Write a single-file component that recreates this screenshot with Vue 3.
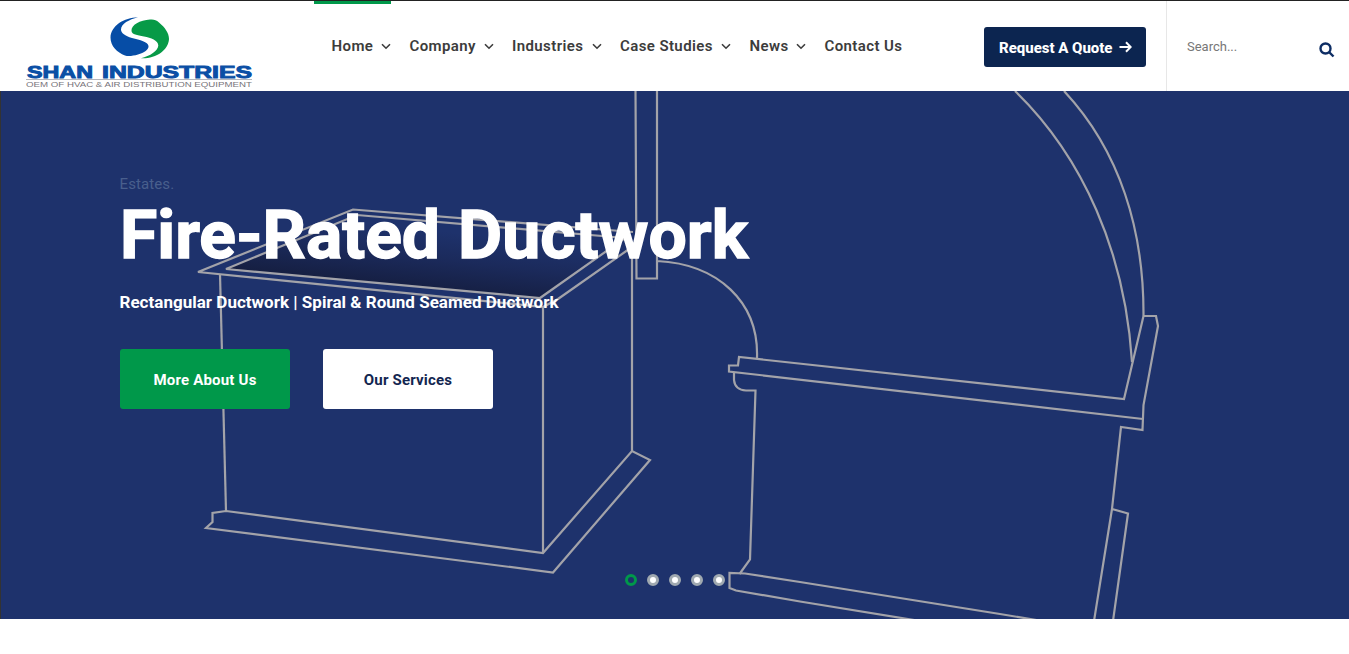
<script setup>
const links = [
  { label: 'Home', menu: true, width: 77 },
  { label: 'Company', menu: true, width: 102.5 },
  { label: 'Industries', menu: true, width: 108 },
  { label: 'Case Studies', menu: true, width: 129.5 },
  { label: 'News', menu: true, width: 75 },
  { label: 'Contact Us', menu: false, width: 90 }
]
const slides = [0, 1, 2, 3, 4]
</script>

<template>
  <div class="page">
    <header class="header">
      <svg class="logo" width="240" height="90" viewBox="20 1 240 90" role="img" aria-label="Shan Industries">
        <path fill="#064da6" d="M138 17.300C124 17.500 111 26 110.500 37.500 110.500 46 117 52.500 125 55.500 128 56.500 133 56 138 54.500 144 53 149 49.500 148.500 46 148 42 140 40 132 38 125 36 121 33 121 29.500 121 24 129 19.500 138 17.300z" />
        <path fill="#079a47" d="M131.500 31C131 25 140 20 150 19.500 154 19.200 156 19.800 159 22.500 165 27.500 169 33 169 39 168.500 50 156 59 141 58.300 150 56 158 51 158.300 45.500 158 40 151 38 144 36.500 137 35 132 34.500 131.500 31z" />
        <text class="wordmark" x="27" y="77.600" textLength="66" lengthAdjust="spacingAndGlyphs">SHAN</text>
        <text class="wordmark" x="102" y="77.600" textLength="150" lengthAdjust="spacingAndGlyphs">INDUSTRIES</text>
        <path d="M26 79.500H252" stroke="#b4b6bc" />
        <text class="tagline" x="26" y="87.200" textLength="226" lengthAdjust="spacingAndGlyphs">OEM OF HVAC &amp; AIR DISTRIBUTION EQUIPMENT</text>
      </svg>
      <nav class="nav">
        <a v-for="(link, i) in links" :key="link.label" class="link" :class="{ active: i === 0 }" :style="{ width: link.width + 'px' }">
          <span>{{ link.label }}</span>
          <svg v-if="link.menu" class="chevron" width="10" height="7" viewBox="0 0 10 7"><path d="M1 1.200 5 5.200 9 1.200" /></svg>
        </a>
      </nav>
      <a class="quote">
        <span>Request A Quote</span>
        <svg width="13" height="12" viewBox="0 0 13 12"><path d="M.5 6h11M7 1.200 11.700 6 7 10.800" /></svg>
      </a>
      <div class="search">
        <span>Search...</span>
        <svg width="16" height="16" viewBox="0 0 16 16"><circle cx="6.500" cy="6.500" r="5" /><path d="m10.500 10.500 4 4" /></svg>
      </div>
    </header>

    <section class="hero">
      <svg class="drawing" width="1349" height="528" viewBox="0 91 1349 528">
        <defs>
          <linearGradient id="opening" gradientUnits="userSpaceOnUse" x1="395" y1="226" x2="388" y2="288">
            <stop offset="0" stop-color="#1e326c" />
            <stop offset=".45" stop-color="#1b2a5b" />
            <stop offset="1" stop-color="#151e40" />
          </linearGradient>
        </defs>
        <path fill="url(#opening)" d="M226 269 357 215 625 238 540 298z" />
        <g class="lines">
          <path d="M558 299 543 307 198 272 353 209.500 633 232M558 299 632 247" />
          <path d="M226 269 357 215 625 238 540 298z" />
          <path d="M543 553V307M632 246V451" />
          <path d="M220 274 226 511" />
          <path d="M226 511 543 553 632 451 650 460 553 572.500 206 528 212.500 522V513z" />
          <path d="M635.500 91 636.500 278.500H657V91M657 261C718 264 759 302 757 358" />
          <path d="M1143.500 316 1124 399 739 357 738 365.500H729V371.500L1143 419" />
          <path d="M734 373V380Q735 390 746 390.500H755.500L750 559.500 739.500 574" />
          <path d="M1045 621.500 1000 614 800 582 745 573.500 729.500 573V588L736 590.500 800 601.500 920 621" />
          <path d="M1015 91C1083 157 1125 252 1132 362M1064 91C1120 151 1144 230 1143.500 316" />
          <path d="M1143.500 316H1156L1158 326 1143.500 405 1142.500 430 1121 427 1112 509 1128 513.500 1113 621M1112 509 1094 621" />
        </g>
      </svg>
      <div class="content">
        <p class="eyebrow">Estates.</p>
        <h1>
          <svg width="660" height="94" viewBox="0 -10 660 94">
            <text x="0" y="59.500" textLength="320" lengthAdjust="spacingAndGlyphs">Fire-Rated</text>
            <text x="338" y="59.500" textLength="290" lengthAdjust="spacingAndGlyphs">Ductwork</text>
          </svg>
        </h1>
        <p class="summary">Rectangular Ductwork | Spiral &amp; Round Seamed Ductwork</p>
        <div class="actions">
          <a class="button green">More About Us</a>
          <a class="button white">Our Services</a>
        </div>
      </div>
      <div class="dots">
        <i v-for="slide in slides" :key="slide" :class="{ current: slide === 0 }"></i>
      </div>
    </section>
  </div>
</template>

<style>
body { margin: 0; background: #fff; }
</style>

<style scoped>
.page { width: 1349px; height: 654px; overflow: hidden; font-family: Roboto, "Liberation Sans", sans-serif; }
.header { box-sizing: border-box; height: 91px; border-top: 1px solid #222; display: flex; background: #fff; }
.logo { margin-left: 20px; flex: none; }
.wordmark { font: bold 16.500px "Liberation Sans", Arial, sans-serif; fill: #0a4fa5; stroke: #0a4fa5; stroke-width: .9; }
.tagline { font: 7.500px "Liberation Sans", Arial, sans-serif; fill: #77747a; }
.nav { width: 610px; margin-left: 54px; display: flex; flex: none; }
.link { box-sizing: border-box; height: 90px; padding-left: 17.500px; display: flex; align-items: center; flex: none; color: #3c3c3c; font-size: 15px; font-weight: 600; letter-spacing: .4px; white-space: nowrap; }
.link.active { border-top: 3px solid #00984a; padding-bottom: 3px; }
.link + .link { padding-left: 18.500px; }
.chevron { margin-left: auto; fill: none; stroke: #3c3c3c; stroke-width: 1.600; }
.quote { box-sizing: border-box; width: 162px; height: 40px; margin: 26px 0 0 60px; padding: 0 14px 0 15px; display: flex; align-items: center; justify-content: space-between; flex: none; border-radius: 3px; background: #0c2550; color: #fff; font-size: 15px; font-weight: 800; letter-spacing: -.02px; white-space: nowrap; }
.quote span { padding-top: 2px; }
.quote svg { fill: none; stroke: #fff; stroke-width: 2; }
.search { box-sizing: border-box; width: 183px; height: 90px; margin-left: 20px; padding: 0 14.500px 0 20px; border-left: 1px solid #e7e7e7; display: flex; align-items: center; justify-content: space-between; flex: none; color: #777; font-size: 13px; }
.search svg { margin-top: 8px; fill: none; stroke: #0d2d64; stroke-width: 2.400; }
.hero { box-sizing: border-box; position: relative; height: 528px; background: #1e326c; border-left: 1px solid #333; overflow: hidden; }
.drawing { position: absolute; left: -1px; top: 0; }
.lines { fill: none; stroke: #a3a3a9; stroke-width: 2.200; }
.content { position: relative; padding: 84px 0 0 118.500px; }
p, h1 { margin: 0; }
.eyebrow { font-size: 15px; line-height: 18px; letter-spacing: .1px; color: #495f8d; }
h1 { height: 94px; margin: -5px 0 -10px; line-height: 0; }
h1 text { font: 700 67px Roboto, sans-serif; fill: #fff; stroke: #fff; stroke-width: 1.400; }
.summary { margin-top: 19px; font-size: 17px; line-height: 22px; font-weight: 700; letter-spacing: .02px; color: #fff; white-space: nowrap; }
.actions { display: flex; gap: 33px; margin-top: 36px; margin-left: .5px; }
.button { width: 170px; height: 60px; border-radius: 3px; display: flex; align-items: center; justify-content: center; box-sizing: border-box; padding-top: 2px; font-size: 15px; font-weight: 700; letter-spacing: .2px; }
.green { background: #00984a; color: #fff; }
.white { background: #fff; color: #132650; }
.dots { position: absolute; left: 624px; top: 483px; display: flex; gap: 10px; }
.dots i { box-sizing: border-box; width: 12px; height: 12px; border: 3px solid #a0a9b0; border-radius: 50%; background: #fff; }
.dots i.current { border-color: #00984a; background: transparent; }
</style>
